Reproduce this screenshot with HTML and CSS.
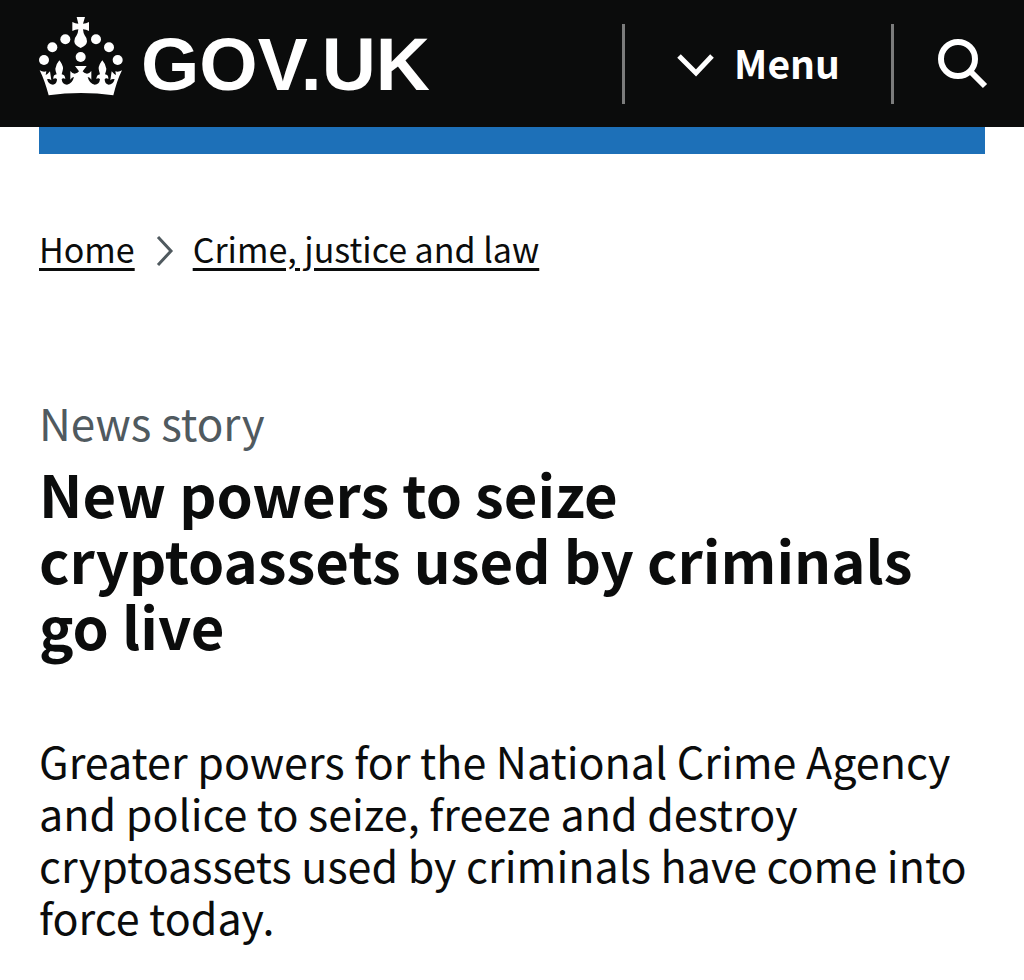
FILE: index.html
```html
<!DOCTYPE html>
<html lang="en">
<head>
<meta charset="utf-8">
<meta name="viewport" content="width=device-width, initial-scale=1">
<title>New powers to seize cryptoassets used by criminals go live - GOV.UK</title>
<link rel="stylesheet" href="styles.css">
</head>
<body>
<header class="header">
  <a class="logo" href="#" aria-label="GOV.UK">
    <svg class="logo-crown" viewBox="27 20 252 240" fill="#fff" aria-hidden="true">
      <circle cx="42" cy="152" r="15"/>
      <circle cx="67" cy="114" r="15"/>
      <circle cx="106" cy="90" r="15"/>
      <circle cx="198" cy="90" r="15"/>
      <circle cx="237" cy="114" r="15"/>
      <circle cx="263" cy="152" r="15"/>
      <circle cx="152" cy="143" r="15"/>
      <path d="M140 23h25l-6 20q9 0 18-5v27q-9-4-18-5 1 12 5 18 7 8 7 18 0 12-19 20-19-8-19-20 0-10 7-18 4-6 5-18-9 1-18 5V38q9 5 18 5z"/>
      <path d="M29 183Q39 189 49 186L47 197Q53 195 60 186L64 213Q58 207 51 210Q56 226 69 226Q81 224 81 210Q77 204 70 209Q69 196 80 195Q76 185 76 178Q77 166 88 153Q99 166 99 178Q98 185 95 195Q105 196 106 209Q99 204 95 210Q97 226 111 226Q127 223 132 203Q125 203 121 211V185Q127 193 134 193Q144 192 147 186L135 170H170L158 186Q161 192 171 193Q178 193 184 185V211Q180 203 173 203Q178 223 194 226Q208 226 210 210Q206 204 199 209Q200 196 210 195Q207 185 206 178Q206 166 217 153Q228 166 229 178Q229 185 225 195Q236 196 235 209Q228 204 224 210Q224 224 236 226Q249 226 254 210Q247 207 241 213L245 186Q252 195 258 197L256 186Q266 189 276 183Q261 213 250 258Q153 244 56 258Q44 213 29 183z"/>
    </svg>
    <span class="logo-text">GOV.UK</span>
  </a>
  <div class="header-actions">
    <button class="header-button menu-button" type="button">
      <svg class="menu-chevron" viewBox="0 0 38 28" fill="none" stroke="#fff" stroke-width="5" aria-hidden="true"><path d="M3 6l17 17L36 6"/></svg>
      <span class="menu-label">Menu</span>
    </button>
    <button class="header-button search-button" type="button" aria-label="Search">
      <svg class="search-icon" viewBox="0 0 50 50" fill="none" stroke="#fff" aria-hidden="true"><circle cx="20" cy="20" r="17" stroke-width="6"/><path d="M31 31l16 16" stroke-width="6"/></svg>
    </button>
  </div>
</header>
<div class="container">
  <div class="brand-bar"></div>
  <nav class="breadcrumbs" aria-label="Breadcrumb">
    <a class="breadcrumb-link" href="#">Home</a>
    <svg class="breadcrumb-arrow" viewBox="0 0 20 30" fill="none" stroke="#505a5f" stroke-width="3" aria-hidden="true"><path d="M4 1l13 14L4 29"/></svg>
    <a class="breadcrumb-link" href="#">Crime, justice and law</a>
  </nav>
  <main>
    <p class="caption">News story</p>
    <h1 class="title">New powers to seize cryptoassets used by criminals go live</h1>
    <p class="lead">Greater powers for the National Crime Agency and police to seize, freeze and destroy cryptoassets used by criminals have come into force today.</p>
  </main>
</div>
</body>
</html>
```

FILE: styles.css
```css
* {
  box-sizing: border-box;
}

body {
  margin: 0;
  background: #fff;
  color: #0b0c0c;
  font-family: "Noto Sans CJK SC", "Noto Sans", sans-serif;
}

.header {
  display: flex;
  justify-content: space-between;
  height: 127px;
  padding-left: 39px;
  background: #0b0c0c;
  color: #fff;
}

.logo {
  display: flex;
  align-items: center;
  gap: 18px;
  color: #fff;
  text-decoration: none;
}

.logo-crown {
  width: 84px;
  height: 80px;
  margin-bottom: 16px;
}

.logo-text {
  font: 700 75px/80px "Liberation Sans", Arial, sans-serif;
}

.header-actions {
  display: flex;
  align-items: center;
}

.header-button {
  display: flex;
  align-items: center;
  justify-content: center;
  height: 80px;
  padding: 0;
  border: 0;
  border-left: 3px solid #7b7c7c;
  background: none;
  color: #fff;
  font: 700 39px/48px "Noto Sans CJK SC", "Noto Sans", sans-serif;
}

.menu-button {
  gap: 20px;
  width: 269px;
}

.menu-chevron {
  width: 38px;
  height: 28px;
}

.menu-label {
  padding-bottom: 4px;
}

.search-button {
  width: 133px;
  padding-left: 8px;
}

.search-icon {
  width: 50px;
  height: 50px;
}

.container {
  padding: 0 39px 32px;
}

.brand-bar {
  height: 27px;
  background: #1d70b8;
}

.breadcrumbs {
  display: flex;
  align-items: center;
  gap: 19px;
  margin-top: 71px;
}

.breadcrumb-link {
  color: inherit;
  font-size: 34px;
  line-height: 48px;
  text-decoration-thickness: 3px;
  text-underline-offset: 5px;
}

.breadcrumb-arrow {
  width: 20px;
  height: 30px;
  margin-top: 4px;
}

.caption {
  margin: 123px 0 0;
  color: #505a5f;
  font-size: 44px;
  line-height: 52px;
}

.title {
  margin: 12px 0 0;
  padding-right: 32px;
  font-size: 58px;
  line-height: 66px;
}

.lead {
  margin: 76px 0 0;
  font-size: 43px;
  line-height: 52px;
}
```
